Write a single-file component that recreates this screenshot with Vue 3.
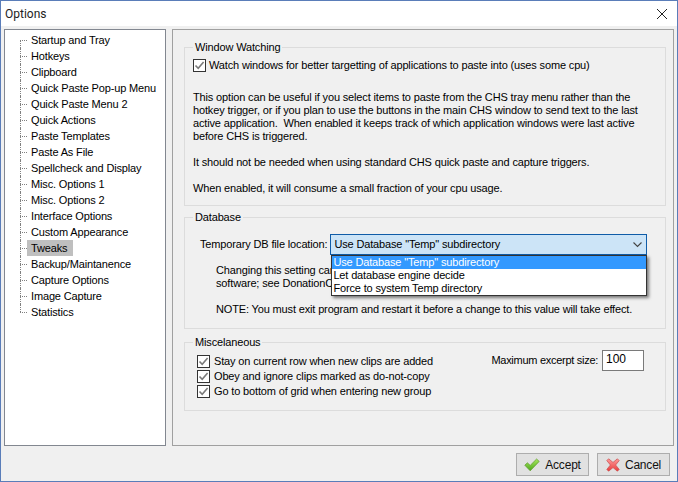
<script setup>
const items = ['Startup and Tray','Hotkeys','Clipboard','Quick Paste Pop-up Menu','Quick Paste Menu 2','Quick Actions','Paste Templates','Paste As File','Spellcheck and Display','Misc. Options 1','Misc. Options 2','Interface Options','Custom Appearance','Tweaks','Backup/Maintanence','Capture Options','Image Capture','Statistics']
const misc = ['Stay on current row when new clips are added','Obey and ignore clips marked as do-not-copy','Go to bottom of grid when entering new group']
</script>

<template>
  <div class="window">
    <header class="titlebar">
      <span class="title">Options</span>
      <svg class="close" width="10" height="10" viewBox="0 0 10 10"><path d="M0 0L10 10M10 0L0 10" stroke="#222" stroke-width="1" fill="none"/></svg>
    </header>
    <main class="content">
      <nav class="tree">
        <div v-for="item in items" :key="item" class="tree-row">
          <span class="tree-label" :class="{ selected: item === 'Tweaks' }">{{ item }}</span>
        </div>
      </nav>
      <section class="panel">
        <fieldset class="group group-watch">
          <legend>Window Watching</legend>
          <label class="check watch-check">
            <span class="box"><svg width="11" height="11" viewBox="0 0 11 11"><path d="M1.5 5.5L4.2 8.3L9.6 2" stroke="#7a7a7a" stroke-width="1.6" fill="none"/></svg></span>
            Watch windows for better targetting of applications to paste into (uses some cpu)
          </label>
          <p class="para first">This option can be useful if you select items to paste from the CHS tray menu rather than the<br>hotkey trigger, or if you plan to use the buttons in the main CHS window to send text to the last<br>active application.&nbsp; When enabled it keeps track of which application windows were last active<br>before CHS is triggered.</p>
          <p class="para">It should not be needed when using standard CHS quick paste and capture triggers.</p>
          <p class="para">When enabled, it will consume a small fraction of your cpu usage.</p>
        </fieldset>

        <fieldset class="group group-db">
          <legend>Database</legend>
          <div class="db-row">
            <span class="db-label">Temporary DB file location:</span>
            <div class="combo">
              <span>Use Database "Temp" subdirectory</span>
              <svg width="9" height="6" viewBox="0 0 9 6"><path d="M0.5 0.5L4.5 4.5L8.5 0.5" stroke="#444" stroke-width="1.1" fill="none"/></svg>
              <ul class="dropdown">
                <li class="active">Use Database "Temp" subdirectory</li>
                <li>Let database engine decide</li>
                <li>Force to system Temp directory</li>
              </ul>
            </div>
          </div>
          <p class="note first-note">Changing this setting can cause conflicts with some antivirus<br>software; see DonationCoder forum for more details.</p>
          <p class="note">NOTE: You must exit program and restart it before a change to this value will take effect.</p>
        </fieldset>

        <fieldset class="group group-misc">
          <legend>Miscelaneous</legend>
          <div class="misc-row">
            <div class="misc-checks">
              <label v-for="m in misc" :key="m" class="check">
                <span class="box"><svg width="11" height="11" viewBox="0 0 11 11"><path d="M1.5 5.5L4.2 8.3L9.6 2" stroke="#7a7a7a" stroke-width="1.6" fill="none"/></svg></span>
                {{ m }}
              </label>
            </div>
            <div class="excerpt">
              <span class="excerpt-label">Maximum excerpt size:</span>
              <span class="input">100</span>
            </div>
          </div>
        </fieldset>
      </section>
    </main>
    <footer class="footer">
      <button class="btn">
        <svg width="16" height="14" viewBox="0 0 16 14"><defs><linearGradient id="gk" x1="0" y1="0" x2="0" y2="1"><stop offset="0" stop-color="#a8e860"/><stop offset="1" stop-color="#4ea81c"/></linearGradient></defs><path d="M0.8 7.2L3.4 4.8L6.2 7.4L12.6 1L15.2 3.4L6.2 12.8Z" fill="url(#gk)" stroke="#5a9a2a" stroke-width="0.7"/></svg>
        Accept
      </button>
      <button class="btn">
        <svg width="14" height="14" viewBox="0 0 14 14"><defs><linearGradient id="gx" x1="0" y1="0" x2="0" y2="1"><stop offset="0" stop-color="#ff9a9a"/><stop offset="1" stop-color="#e83c3c"/></linearGradient></defs><path d="M2.6 0.8L7 4.4L11.4 0.8L13.2 2.6L9.6 7L13.2 11.4L11.4 13.2L7 9.6L2.6 13.2L0.8 11.4L4.4 7L0.8 2.6Z" fill="url(#gx)" stroke="#c84a4a" stroke-width="0.7"/></svg>
        Cancel
      </button>
    </footer>
  </div>
</template>

<style>
html, body { margin: 0; padding: 0; background: #f0f0f0; }
</style>

<style scoped>
.window {
  width: 678px; height: 482px; box-sizing: border-box;
  border: 1px solid #5a7db9; background: #f0f0f0;
  display: flex; flex-direction: column;
  font: 11px/13px "Liberation Sans", Arial, sans-serif; letter-spacing: -0.15px; color: #000;
  overflow: hidden;
}
.titlebar {
  height: 25px; flex: none; background: #fff;
  display: flex; align-items: center; justify-content: space-between;
  padding: 0 10px 0 4px;
}
.title { font: 12px Roboto, sans-serif; letter-spacing: 0; color: #222; }
.content { display: flex; gap: 6px; padding: 3px 3px 0; height: 417px; flex: none; }
.tree {
  width: 160px; flex: none; background: #fff; border: 1px solid #828790;
  padding-top: 2px; box-sizing: content-box; height: 413px;
}
.tree-row { position: relative; height: 16px; padding-left: 22px; display: flex; align-items: center; }
.tree-row::before {
  content: ""; position: absolute; left: 15px; top: 8px; width: 7px;
  border-top: 1px dotted #808080;
}
.tree-row::after {
  content: ""; position: absolute; left: 15px; top: 0; height: 16px;
  border-left: 1px dotted #808080;
}
.tree-row:first-child::after { top: 8px; height: 8px; }
.tree-row:last-child::after { height: 8px; }
.tree-label { padding: 1px 4px; line-height: 14px; }
.tree-label.selected { background: #bfbfbf; padding-right: 6px; }
.panel {
  flex: 1; min-width: 0; border: 1px solid #a0a0a0; box-sizing: border-box;
  padding: 11px 7px 0 11px; display: flex; flex-direction: column;
}
.group { margin: 0; border: 1px solid #dcdcdc; padding: 0 8px; min-width: 0; box-sizing: border-box; }
.group legend { margin-left: 0; padding: 0 2px; line-height: 13px; }
.group-watch { height: 165px; padding-top: 4px; }
.group-db { height: 118px; margin-top: 5px; padding-top: 10px; }
.group-misc { height: 75px; margin-top: 7px; padding-top: 5px; padding-right: 21px; }
.check { display: flex; align-items: center; gap: 4px; white-space: nowrap; height: 15px; }
.watch-check { gap: 3px; }
.box {
  width: 11px; height: 11px; border: 1px solid #333; background: #fff;
  display: inline-flex; flex: none;
}
.para { margin: 13px 0 0; white-space: nowrap; }
.para.first { margin-top: 18px; }
.db-row { display: flex; align-items: center; gap: 3px; margin-left: 7px; }
.combo {
  position: relative; width: 317px; height: 21px; box-sizing: border-box;
  border: 1px solid #0f5ca8; background: #cce4f7;
  display: flex; align-items: center; justify-content: space-between; padding: 0 4px 0 3px;
}
.dropdown {
  position: absolute; left: 0; top: 20px; width: 316px; box-sizing: border-box;
  margin: 0; padding: 0; list-style: none; background: #fff;
  border: 1px solid #333; box-shadow: 2px 2px 3px rgba(0,0,0,.5); z-index: 2;
}
.dropdown li { height: 13px; padding-left: 1px; line-height: 13px; }
.dropdown li.active { background: #3399ff; color: #fff; }
.note { margin: 0 0 0 23px; white-space: nowrap; }
.first-note { margin-top: 9px; }
.note + .note { margin-top: 13px; }
.misc-row { display: flex; justify-content: space-between; }
.misc-checks { display: flex; flex-direction: column; margin-left: 4px; }
.excerpt { display: flex; align-items: center; gap: 4px; height: 21px; margin-top: -4px; }
.excerpt-label { letter-spacing: -0.28px; }
.input {
  width: 42px; height: 21px; box-sizing: border-box; border: 1px solid #7a7a7a;
  background: #fff; padding: 2px 3px; font-size: 12px; letter-spacing: 0;
}
.footer { flex: 1; display: flex; justify-content: flex-end; gap: 8px; padding: 7px 7px 0 0; }
.btn {
  width: 73px; height: 23px; box-sizing: border-box; border: 1px solid #adadad; background: #e1e1e1;
  font: 12px "Liberation Sans", Arial, sans-serif; letter-spacing: -0.2px; color: #111;
  display: flex; align-items: center; justify-content: center; gap: 5px; padding: 0;
}
</style>
